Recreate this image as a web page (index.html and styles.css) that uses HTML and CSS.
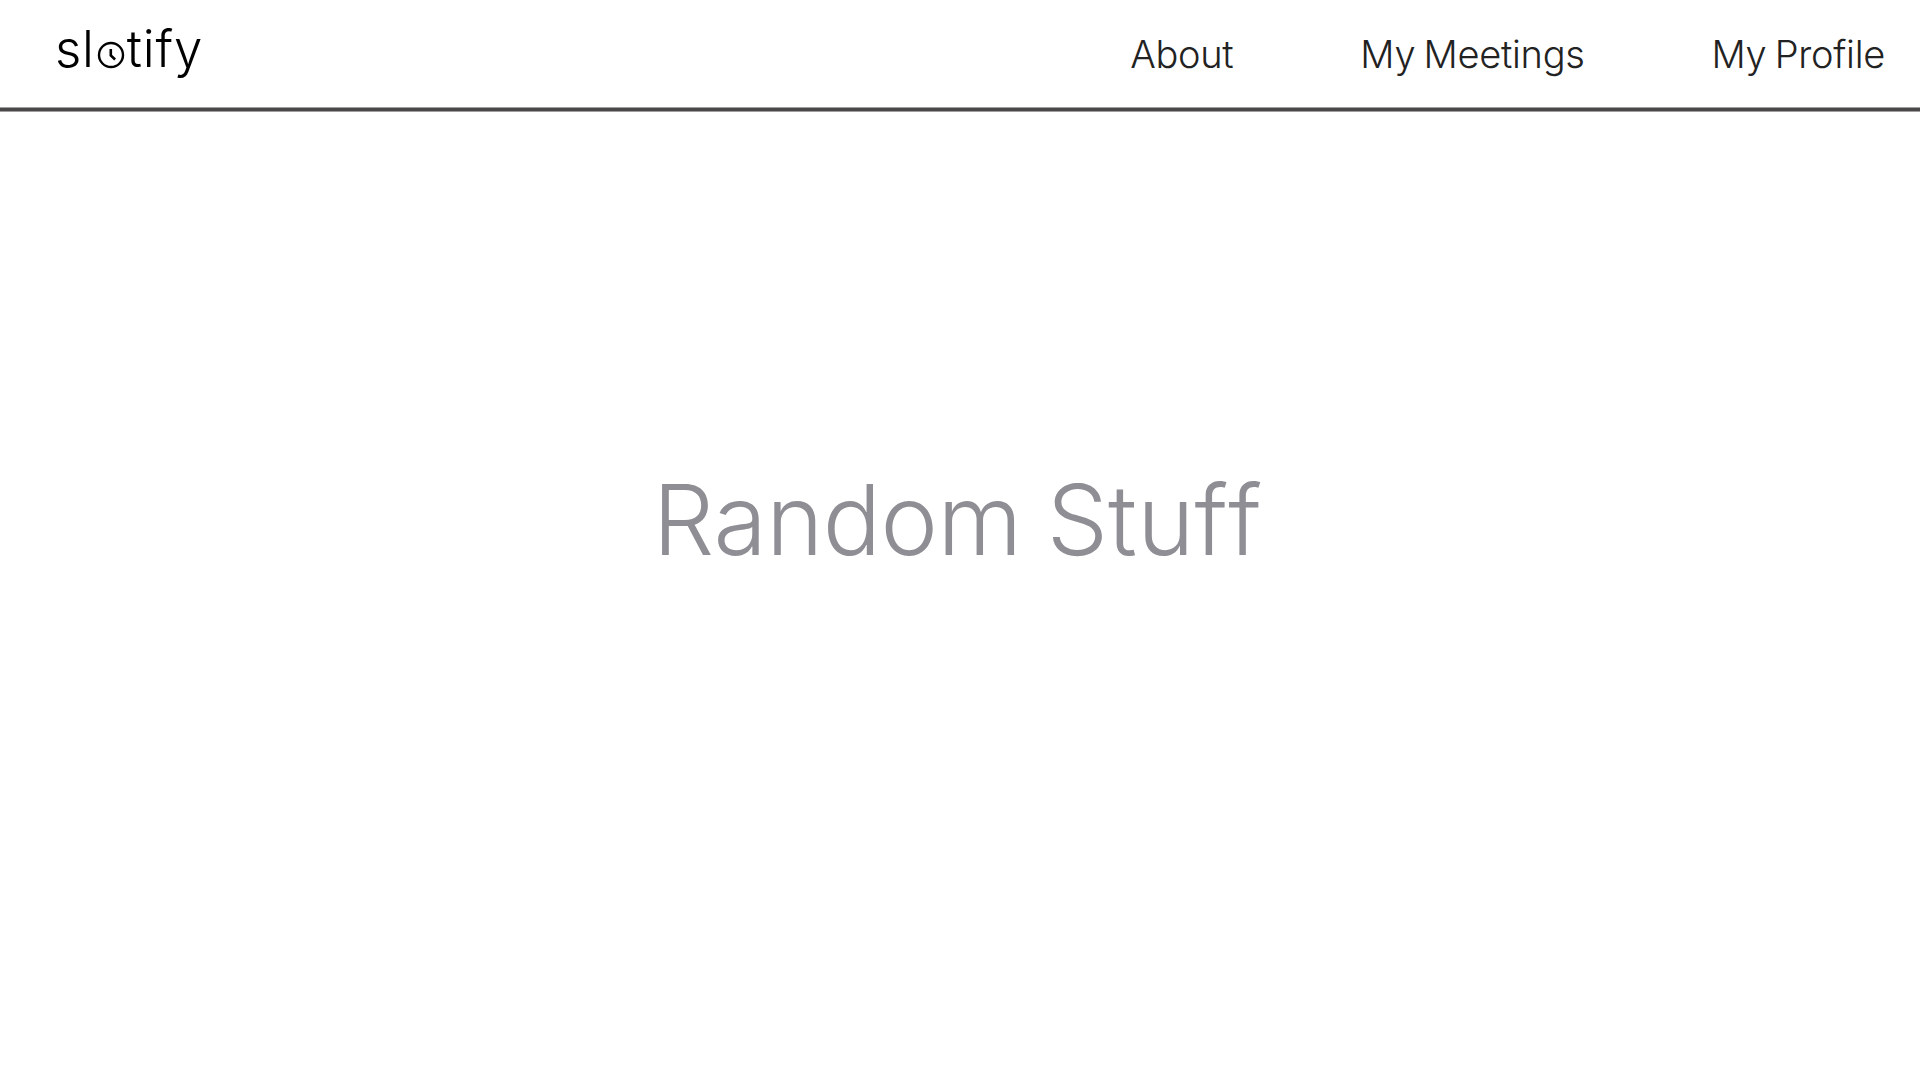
FILE: index.html
```html
<!DOCTYPE html>
<html lang="en">
<head>
<meta charset="utf-8">
<title>slotify</title>
<link rel="stylesheet" href="styles.css">
</head>
<body>
<header class="header">
  <a class="logo" aria-label="slotify"><span class="logo-start">sl</span><svg class="logo-clock" viewBox="0 0 28 28"><circle cx="14" cy="14" r="12"/><path class="hands" d="M13.8 8v6.4l4.3 4.1"/></svg><span class="logo-end">tify</span></a>
  <nav class="nav">
    <a class="link">About</a>
    <a class="link">My Meetings</a>
    <a class="link">My Profile</a>
  </nav>
</header>
<main class="main">
  <h1 class="title">Random <span class="title-end">Stuff</span></h1>
</main>
</body>
</html>
```
FILE: styles.css
```css
* { box-sizing: border-box; }
body { margin: 0; height: 1080px; overflow: hidden; background: #fff; font-family: Inter, sans-serif; display: flex; flex-direction: column; }
.header { height: 111px; border-bottom: 3px solid #4a4848; box-shadow: 0 1px #a0a0a0, inset 0 -1px #a0a0a0; display: flex; justify-content: space-between; padding: 0 35px 0 55px; flex: none; }
.logo { display: flex; align-items: flex-start; height: 100px; font-size: 51px; line-height: 64px; padding-top: 17px; color: #000; font-weight: 350; letter-spacing: 0.8px; }
.logo-clock { width: 28px; height: 28px; margin: 24px 0 0 2px; fill: none; stroke: #000; stroke-width: 2.4; flex: none; }
.hands { stroke-width: 2.6; }
.logo-end { margin-left: 2px; letter-spacing: 0.8px; font-kerning: none; }
.nav { display: flex; gap: 127px; padding-top: 30px; font-size: 38px; line-height: 48px; font-weight: 290; color: #222; word-spacing: -2px; letter-spacing: -0.3px; }
.link { white-space: nowrap; }
.main { flex: 1; display: flex; justify-content: center; padding: 349px 5.5px 0 0; }
.title { margin: 0; font-size: 97px; line-height: 120px; font-weight: 320; color: #8f8e94; white-space: nowrap; word-spacing: -1.5px; letter-spacing: -0.6px; font-kerning: none; font-variant-ligatures: none; }
.title-end { letter-spacing: 0.2px; }
```
